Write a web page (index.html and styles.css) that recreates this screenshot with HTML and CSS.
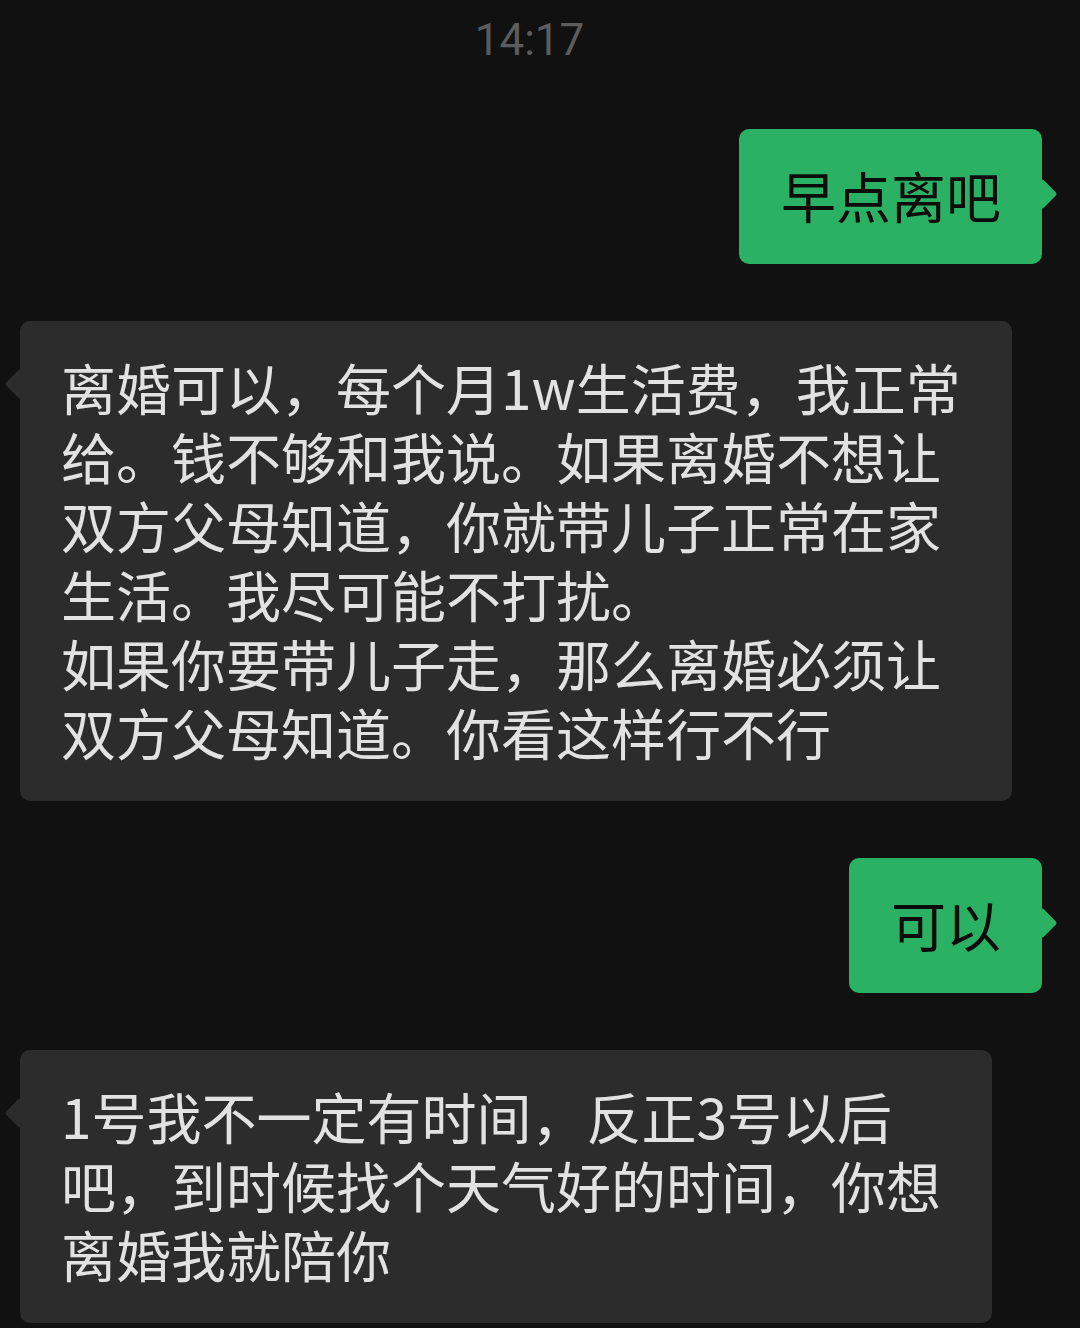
FILE: index.html
```html
<!DOCTYPE html>
<html lang="zh-CN">
<head>
<meta charset="utf-8">
<title>聊天</title>
<link rel="stylesheet" href="styles.css">
</head>
<body>
<div class="chat">
  <div class="time">14:17</div>
  <div class="row row-right">
    <div class="bubble bubble-me">早点离吧</div>
  </div>
  <div class="row row-left">
    <div class="bubble bubble-other">离婚可以，每个月1w生活费，我正常给。钱不够和我说。如果离婚不想让双方父母知道，你就带儿子正常在家生活。我尽可能不打扰。<br>如果你要带儿子走，那么离婚必须让双方父母知道。你看这样行不行</div>
  </div>
  <div class="row row-right">
    <div class="bubble bubble-me">可以</div>
  </div>
  <div class="row row-left">
    <div class="bubble bubble-other bubble-compact">1号我不一定有时间，反正3号以后吧，到时候找个天气好的时间，你想离婚我就陪你</div>
  </div>
</div>
</body>
</html>
```
FILE: styles.css
```css
html, body {
  margin: 0;
  padding: 0;
  background: #111111;
}

body {
  width: 1080px;
  height: 1328px;
  overflow: hidden;
  font-family: "Noto Sans CJK SC", "Noto Sans", sans-serif;
}

.chat {
  display: flex;
  flex-direction: column;
  gap: 57px;
  padding: 0 38px 0 20px;
}

.time {
  font-family: Roboto, "Noto Sans", sans-serif;
  font-size: 44px;
  line-height: 52px;
  color: #5c5c5c;
  text-align: center;
  padding: 14px 3px 0 0;
  margin-bottom: 6px;
}

.row {
  display: flex;
}

.row-right {
  justify-content: flex-end;
}

.row-left {
  justify-content: flex-start;
}

.bubble {
  position: relative;
  box-sizing: border-box;
  font-size: 55px;
  line-height: 69px;
  border-radius: 10px;
  padding: 31px 41px 35px 42px;
  word-break: normal;
  line-break: strict;
}

.bubble::after {
  content: "";
  position: absolute;
  top: 54px;
  width: 22px;
  height: 22px;
  border-radius: 3px;
  transform: rotate(45deg);
}

.bubble-me {
  background: #2bb163;
  color: #0c0c0c;
}

.bubble-me::after {
  right: -11px;
  background: #2bb163;
}

.bubble-other {
  background: #2c2c2c;
  color: #e2e2e2;
  max-width: 992px;
  padding-left: 41px;
  padding-right: 45px;
}

.bubble-other::after {
  left: -11px;
  top: 52px;
  background: #2c2c2c;
}

.bubble-compact {
  max-width: 972px;
}
```
